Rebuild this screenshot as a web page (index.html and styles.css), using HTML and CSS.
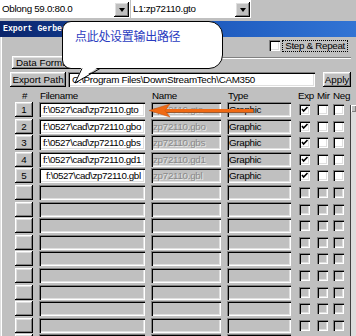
FILE: index.html
```html
<!DOCTYPE html>
<html lang="en">
<head>
    <meta charset="UTF-8">
    <title>Export Gerber</title>
    <link rel="stylesheet" href="styles.css">
</head>
<body>
<div class="toolbar">
    <div class="combo combo-shape">
        <span class="combo-text">Oblong 59.0:80.0</span>
        <span class="combo-btn"><i class="arrow-down"></i></span>
    </div>
    <div class="combo combo-layer">
        <span class="combo-text">L1:zp72110.gto</span>
        <span class="combo-btn"><i class="arrow-down"></i></span>
    </div>
</div>
<div class="dialog">
    <div class="titlebar">Export Gerber</div>
    <div class="step-row">
        <span class="cb"></span>
        <span class="focus-label">Step &amp; Repeat</span>
    </div>
    <div class="format-row">
        <button class="btn btn-format">Data Format</button>
        <div class="sep"></div>
    </div>
    <div class="path-row">
        <button class="btn btn-path">Export Path</button>
        <div class="box box-white path-field">C:\Program Files\DownStreamTech\CAM350</div>
        <button class="btn btn-apply">Apply</button>
    </div>
    <div class="table-area">
        <div class="layer-table">
            <div class="head">
                <span class="head-num">#</span>
                <span>Filename</span>
                <span>Name</span>
                <span>Type</span>
                <span class="checks head-checks"><span class="h-exp">Exp</span><span class="h-mir">Mir</span><span>Neg</span></span>
            </div>
            <div id="rows"></div>
        </div>
        <div class="vscroll"><div class="vscroll-btn"></div></div>
    </div>
</div>

<div class="callout">点此处设置输出路径</div>
<svg class="callout-tail" width="40" height="24" viewBox="0 0 40 24">
    <polygon points="12,4 30,4 5,21" fill="#fff"/>
    <polyline points="12,6.5 5,21 30,6.5" fill="none" stroke="#000" stroke-width="1"/>
</svg>
<svg class="arrow" width="108" height="16" viewBox="0 0 108 16">
    <rect x="14" y="7" width="91" height="3" fill="#f06a14"/>
    <rect x="14" y="10" width="91" height="1" fill="#9a5a30"/>
    <polygon points="1,8.5 22,2 17,8.5 22,15" fill="#f06a14" stroke="#c05010" stroke-width="0.5"/>
</svg>

<script>
    const layers = [
        { file: 'f:\\0527\\cad\\zp72110.gto', name: 'zp72110.gto' },
        { file: 'f:\\0527\\cad\\zp72110.gbo', name: 'zp72110.gbo' },
        { file: 'f:\\0527\\cad\\zp72110.gbs', name: 'zp72110.gbs' },
        { file: 'f:\\0527\\cad\\zp72110.gd1', name: 'zp72110.gd1' },
        { file: 'f:\\0527\\cad\\zp72110.gbl', name: 'zp72110.gbl', indent: true }
    ];
    const check = '<svg width="11" height="11" viewBox="0 0 11 11"><path d="M3 5 L4.6 7 L8.5 3" fill="none" stroke="#000" stroke-width="1.6"/></svg>';
    const rows = document.querySelector('#rows');
    let html = '';

    for (let i = 0; i < 15; i++) {
        const layer = layers[i];
        if (layer) {
            html += `
                <div class="row">
                    <button class="btn btn-num">${i + 1}</button>
                    <div class="box box-white${layer.indent ? ' indent' : ''}">${layer.file}</div>
                    <div class="box box-disabled">${layer.name}</div>
                    <div class="box">Graphic</div>
                    <div class="checks"><span class="cb">${check}</span><span class="cb"></span><span class="cb"></span></div>
                </div>`;
        } else {
            html += `
                <div class="row">
                    <button class="btn btn-num"></button>
                    <div class="box"></div>
                    <div class="box"></div>
                    <div class="box"></div>
                    <div class="checks"><span class="cb cb-off"></span><span class="cb cb-off"></span><span class="cb cb-off"></span></div>
                </div>`;
        }
    }
    rows.innerHTML = html;
</script>
</body>
</html>
```

FILE: styles.css
```css
* {
    box-sizing: border-box;
}
body {
    margin: 0;
    width: 356px;
    height: 336px;
    overflow: hidden;
    position: relative;
    background-color: #c0c0c0;
    font-family: "Liberation Sans", Arial, sans-serif;
    font-size: 9.8px;
    letter-spacing: -0.3px;
    color: #000;
}
.toolbar {
    display: flex;
    gap: 1px;
    height: 21px;
}
.combo {
    display: flex;
    height: 18px;
    background: #fff;
}
.combo-shape {
    width: 130px;
}
.combo-layer {
    width: 120px;
}
.combo-text {
    flex: 1;
    padding-left: 2px;
    line-height: 18px;
    white-space: nowrap;
}
.combo-btn {
    width: 15px;
    height: 15px;
    margin: 2px 1px 1px 0;
    background: #c0c0c0;
    box-shadow: inset -1px -1px #000, inset 1px 1px #fff, inset -2px -2px #808080, inset 2px 2px #dfdfdf;
    display: flex;
    align-items: center;
    justify-content: center;
}
.arrow-down {
    border-left: 3.5px solid transparent;
    border-right: 3.5px solid transparent;
    border-top: 4px solid #000;
}
.dialog {
    height: 315px;
    box-shadow: inset 1px 0 #dfdfdf, inset 2px 0 #fff;
}
.titlebar {
    height: 16px;
    padding-left: 3px;
    line-height: 16px;
    color: #fff;
    font-family: "Liberation Mono", monospace;
    font-size: 8.2px;
    font-weight: bold;
    letter-spacing: 0;
    background: linear-gradient(to right, #0a246a, #1c58bc 55%, #3274d4);
}
.step-row {
    height: 19px;
    display: flex;
    justify-content: flex-end;
    align-items: flex-start;
    gap: 2px;
    padding: 3px 8px 0 0;
}
.focus-label {
    height: 12px;
    line-height: 10px;
    padding: 0 2px;
    border: 1px dotted #000;
}
.format-row {
    display: flex;
    height: 16px;
    padding: 0 5px 0 12px;
}
.sep {
    flex: 1;
    height: 2px;
    margin-top: 1px;
    border-top: 1px solid #808080;
    border-bottom: 1px solid #fff;
}
.path-row {
    display: flex;
    height: 15px;
    padding-left: 10px;
}
.btn {
    background: #c0c0c0;
    border: 0;
    padding: 0;
    font: inherit;
    color: #000;
    white-space: nowrap;
    box-shadow: inset -1px -1px #000, inset 1px 1px #fff, inset -2px -2px #808080, inset 2px 2px #dfdfdf;
}
.btn-format {
    width: 62px;
    height: 13px;
    text-align: left;
    padding-left: 4px;
    overflow: hidden;
}
.btn-path {
    width: 56px;
    height: 15px;
}
.path-field {
    width: 247px;
    margin-left: 2px;
    padding-left: 4px;
}
.btn-apply {
    width: 28px;
    height: 15px;
    margin-left: 8px;
}
.table-area {
    display: flex;
    margin-top: 2px;
}
.layer-table {
    flex: 1;
    padding-left: 15px;
}
.head,
.row {
    display: grid;
    grid-template-columns: 18px 106px 70px 64px 1fr;
    column-gap: 6px;
}
.head {
    height: 13px;
    line-height: 13px;
}
.head span {
    padding-left: 1px;
}
.head-num {
    text-align: center;
}
.head .head-checks {
    padding-left: 0;
}
.h-exp {
    width: 19px;
}
.h-mir {
    width: 16px;
}
.row {
    height: 16.6px;
    align-items: start;
}
.btn-num {
    height: 15px;
}
.box {
    height: 15px;
    line-height: 15px;
    padding-left: 2px;
    white-space: nowrap;
    overflow: hidden;
    box-shadow: inset 1px 1px #808080, inset 2px 2px #000, inset -1px -1px #fff, inset -2px -2px #dfdfdf;
}
.box-white {
    background: #fff;
    padding-left: 4px;
}
.row .box-white {
    letter-spacing: -0.4px;
}
.box-white.indent {
    padding-left: 7px;
}
.box-disabled {
    color: #8a8a8a;
    text-shadow: 1px 1px #e8e8e8;
}
.checks {
    display: flex;
    align-items: center;
    height: 15px;
}
.head-checks {
    height: 13px;
}
.cb {
    width: 11px;
    height: 11px;
    background: #fff;
    box-shadow: inset 1px 1px #808080, inset 2px 2px #000, inset -1px -1px #fff, inset -2px -2px #dfdfdf;
}
.cb svg {
    display: block;
}
.row .cb:nth-child(1) {
    margin-left: 2px;
}
.row .cb:nth-child(2) {
    margin-left: 7px;
}
.row .cb:nth-child(3) {
    margin-left: 5px;
}
.cb-off {
    background: #c0c0c0;
}
.vscroll {
    width: 7px;
    margin-top: 16px;
    height: 240px;
    background: #dcdcdc;
    border-left: 1px solid #404040;
}
.vscroll-btn {
    height: 7px;
    background: #c0c0c0;
    box-shadow: inset 1px 1px #fff, inset -1px -1px #808080;
}
.callout {
    position: absolute;
    left: 62px;
    top: 21px;
    width: 161px;
    height: 48px;
    padding: 7px 0 0 12px;
    background: #fff;
    border: 1px solid #000;
    border-radius: 9px 14px 14px 9px;
    font-family: "Noto Sans CJK SC", sans-serif;
    font-size: 12px;
    letter-spacing: -0.3px;
    line-height: 14px;
    color: #2a3cc0;
}
.callout-tail {
    position: absolute;
    left: 70px;
    top: 62px;
}
.arrow {
    position: absolute;
    left: 148px;
    top: 102px;
}
```
